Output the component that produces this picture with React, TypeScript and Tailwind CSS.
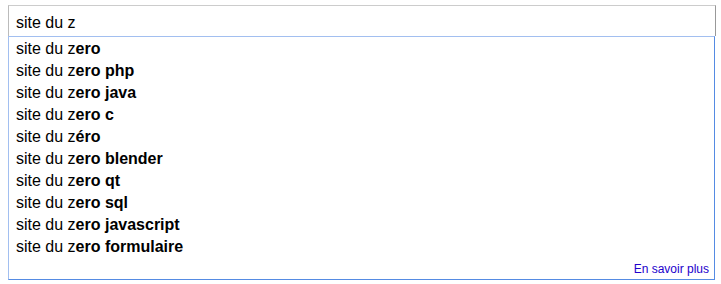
import React from "react";

const items = [
  "ero",
  "ero php",
  "ero java",
  "ero c",
  "éro",
  "ero blender",
  "ero qt",
  "ero sql",
  "ero javascript",
  "ero formulaire",
];

export default function App() {
  return (
    <div
      className="w-[721px] h-[284px] bg-white pl-[8px] pt-[5px]"
      style={{ fontFamily: '"Liberation Sans", Arial, sans-serif' }}
    >
      <div className="w-[708px] h-[31px] border-t border-l border-r border-t-[#cccccc] border-l-[#bbbbbb] border-r-[#999999] pl-[7px] pt-[6px] text-[16px] leading-[22px] text-black">
        site du z
      </div>
      <div className="w-[707px] h-[244px] border border-t-[#a2bff0] border-l-[#a2bff0] border-r-[#558be3] border-b-[#558be3] flex flex-col pt-[1px]">
        {items.map((s, i) => (
          <div key={i} className="h-[22px] pl-[7px] text-[16px] leading-[22px] text-black whitespace-nowrap">
            site du z<b className="font-bold">{s}</b>
          </div>
        ))}
        <div className="h-[21px] flex justify-end pr-[5px] text-[12px] leading-[22px] text-[#2200cc]">
          En savoir plus
        </div>
      </div>
    </div>
  );
}
